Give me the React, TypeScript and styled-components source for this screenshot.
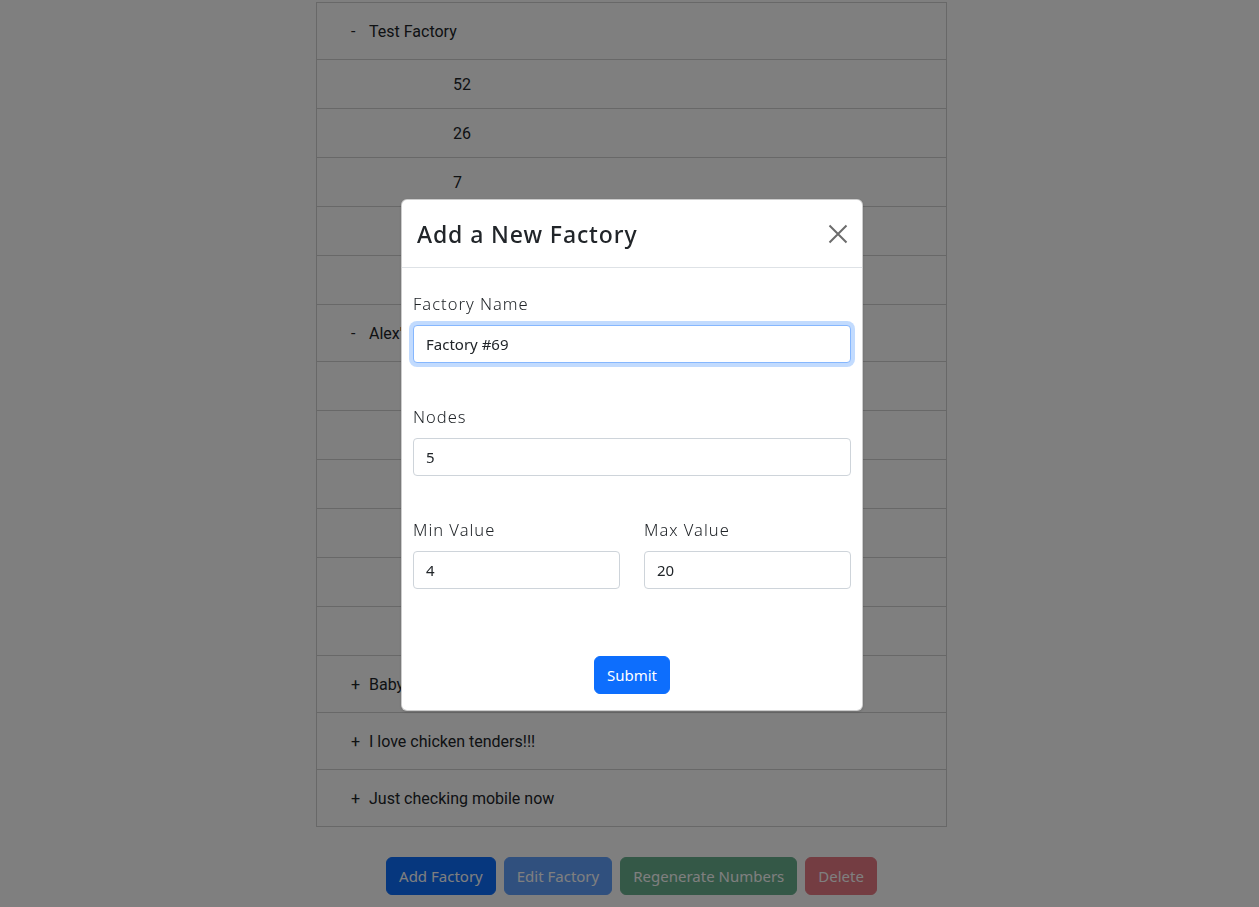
import React from 'react';
import styled, { createGlobalStyle } from 'styled-components';

const GlobalStyle = createGlobalStyle`
  html, body {
    margin: 0;
    padding: 0;
    background: #ffffff;
  }
  * {
    box-sizing: border-box;
  }
`;

interface Factory {
  name: string;
  open: boolean;
  numbers: (number | null)[];
}

// 모달 뒤에 가려진 값은 비워둠
const factories: Factory[] = [
  { name: 'Test Factory', open: true, numbers: [52, 26, 7, null, null] },
  { name: "Alex's Factory", open: true, numbers: [null, null, null, null, null, null] },
  { name: 'Baby Factory', open: false, numbers: [] },
  { name: 'I love chicken tenders!!!', open: false, numbers: [] },
  { name: 'Just checking mobile now', open: false, numbers: [] },
];

const App: React.FC = () => {
  return (
    <>
      <GlobalStyle />
      <Page>
        {/* 공장 목록 */}
        <Tree>
          {factories.map((f) => (
            <React.Fragment key={f.name}>
              <FactoryRow>
                <Toggle>{f.open ? '-' : '+'}</Toggle>
                <span>{f.name}</span>
              </FactoryRow>
              {f.open && f.numbers.map((n, i) => <NumberRow key={i}>{n}</NumberRow>)}
            </React.Fragment>
          ))}
        </Tree>
        {/* 하단 버튼 */}
        <Actions>
          <ActionButton tone="#0d6efd">Add Factory</ActionButton>
          <ActionButton tone="#0d6efd" disabled>Edit Factory</ActionButton>
          <ActionButton tone="#198754" disabled>Regenerate Numbers</ActionButton>
          <ActionButton tone="#dc3545" disabled>Delete</ActionButton>
        </Actions>
      </Page>

      {/* 모달 */}
      <Backdrop>
        <Dialog>
          <Header>
            <Title>Add a New Factory</Title>
            <CloseButton aria-label="Close">
              <svg width="20" height="20" viewBox="0 0 20 20">
                <path d="M1.5 1.5 L18.5 18.5 M18.5 1.5 L1.5 18.5" stroke="#6c6c6c" strokeWidth="2" />
              </svg>
            </CloseButton>
          </Header>
          <Body>
            <Field>
              <Label>Factory Name</Label>
              <Input defaultValue="Factory #69" focused />
            </Field>
            <Field>
              <Label>Nodes</Label>
              <Input defaultValue="5" />
            </Field>
            <Split>
              <Field>
                <Label>Min Value</Label>
                <Input defaultValue="4" />
              </Field>
              <Field>
                <Label>Max Value</Label>
                <Input defaultValue="20" />
              </Field>
            </Split>
            <SubmitRow>
              <SubmitButton>Submit</SubmitButton>
            </SubmitRow>
          </Body>
        </Dialog>
      </Backdrop>
    </>
  );
};

const Page = styled.div`
  width: 635px;
  margin: 2px auto 0;
  padding-left: 4px;
  padding-bottom: 12px;
  font-family: Roboto, 'Liberation Sans', sans-serif;
  color: #212529;
`;

const Tree = styled.div`
  display: flex;
  flex-direction: column;
  border: 1px solid #d0d0d0;
`;

const FactoryRow = styled.div`
  display: flex;
  align-items: center;
  height: 57px;
  padding-left: 34px;
  font-size: 16px;
  white-space: nowrap;
  border-top: 1px solid #d0d0d0;
  &:first-child {
    border-top: none;
    height: 56px;
  }
`;

const Toggle = styled.span`
  display: inline-block;
  width: 18px;
`;

const NumberRow = styled.div`
  display: flex;
  align-items: center;
  height: 49px;
  padding-left: 136px;
  font-size: 16px;
  border-top: 1px solid #d0d0d0;
`;

const Actions = styled.div`
  display: flex;
  justify-content: center;
  gap: 8px;
  margin-top: 30px;
`;

const ActionButton = styled.button<{ tone: string }>`
  height: 38px;
  padding: 0 12px;
  border: 1px solid ${(p) => p.tone};
  border-radius: 6px;
  background: ${(p) => p.tone};
  color: #fff;
  font-family: 'Noto Sans', 'Open Sans', sans-serif;
  font-size: 15px;
  &:disabled {
    opacity: 0.65;
  }
`;

const Backdrop = styled.div`
  position: fixed;
  inset: 0;
  background: rgba(0, 0, 0, 0.5);
  display: flex;
  align-items: center;
  justify-content: center;
  padding-left: 5px;
  padding-top: 3px;
`;

const Dialog = styled.div`
  width: 462px;
  background: #fff;
  border: 1px solid rgba(0, 0, 0, 0.2);
  border-radius: 6px;
  box-shadow: 0 1px 3px rgba(0, 0, 0, 0.15);
  font-family: 'Noto Sans', 'Open Sans', sans-serif;
  color: #212529;
`;

const Header = styled.div`
  display: flex;
  align-items: center;
  justify-content: space-between;
  height: 68px;
  padding: 0 14px 0 15px;
  border-bottom: 1px solid #dee2e6;
`;

const Title = styled.h5`
  margin: 0;
  font-size: 23px;
  font-weight: 500;
  letter-spacing: 0.9px;
`;

const CloseButton = styled.button`
  display: flex;
  padding: 0;
  border: none;
  background: transparent;
`;

const Body = styled.div`
  display: flex;
  flex-direction: column;
  gap: 42px;
  padding: 24px 11px 16px;
`;

const Field = styled.div`
  display: flex;
  flex-direction: column;
  flex: 1;
`;

const Label = styled.label`
  font-size: 16.5px;
  letter-spacing: 1px;
  line-height: 24px;
  margin-bottom: 9px;
  font-weight: 300;
`;

const Input = styled.input<{ focused?: boolean }>`
  height: 38px;
  width: 100%;
  padding: 0 12px;
  font-family: 'Noto Sans', 'Open Sans', sans-serif;
  font-size: 15px;
  color: #212529;
  border: 1px solid ${(p) => (p.focused ? '#86b7fe' : '#ced4da')};
  border-radius: 4px;
  box-shadow: ${(p) => (p.focused ? '0 0 0 4px rgba(13, 110, 253, 0.25)' : 'none')};
  outline: none;
`;

const Split = styled.div`
  display: flex;
  gap: 24px;
`;

const SubmitRow = styled.div`
  display: flex;
  justify-content: center;
  margin-top: 25px;
`;

const SubmitButton = styled.button`
  height: 38px;
  padding: 0 12px;
  background: #0d6efd;
  border: 1px solid #0d6efd;
  border-radius: 6px;
  color: #fff;
  font-family: 'Noto Sans', 'Open Sans', sans-serif;
  font-size: 15px;
`;

export default App;
